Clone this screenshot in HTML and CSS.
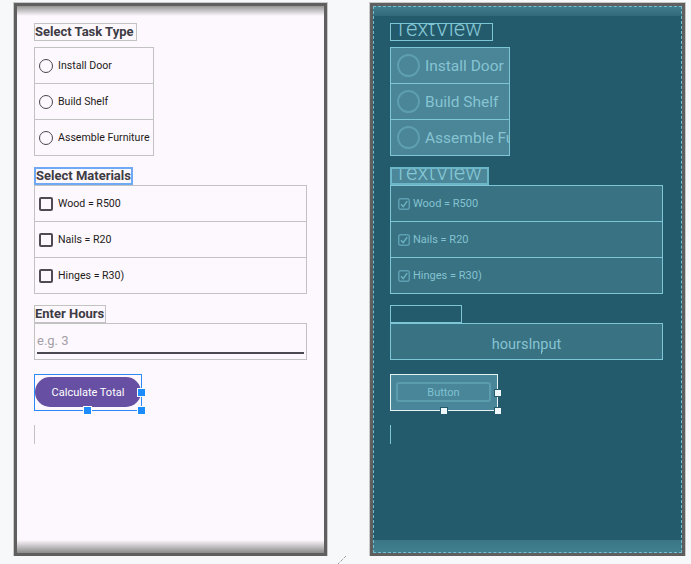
FILE: index.html
```html
<!DOCTYPE html>
<html>
<head>
<meta charset="utf-8">
<link rel="stylesheet" href="styles.css">
</head>
<body>
<div class="stage">
  <div class="device design">
    <div class="topbar"></div>
    <div class="screen">
      <div class="label w-task">Select Task Type</div>
      <div class="group radios">
        <div class="row"><span class="radio"></span><span class="txt">Install Door</span></div>
        <div class="row"><span class="radio"></span><span class="txt">Build Shelf</span></div>
        <div class="row"><span class="radio"></span><span class="txt">Assemble Furniture</span></div>
      </div>
      <div class="label w-mat sel">Select Materials</div>
      <div class="group checks">
        <div class="row"><span class="check"></span><span class="txt">Wood = R500</span></div>
        <div class="row"><span class="check"></span><span class="txt">Nails = R20</span></div>
        <div class="row"><span class="check"></span><span class="txt">Hinges = R30)</span></div>
      </div>
      <div class="label w-hours">Enter Hours</div>
      <div class="edit"><span class="hint">e.g. 3</span><span class="underline"></span></div>
      <div class="btnwrap">
        <div class="btn">Calculate Total</div>
        <span class="handle h-right"></span>
        <span class="handle h-bottom"></span>
        <span class="handle h-corner"></span>
      </div>
      <div class="result"></div>
    </div>
    <div class="bottombar"></div>
  </div>

  <div class="device blueprint">
    <div class="topbar"></div>
    <div class="screen">
      <div class="label w-task"><span class="big">TextView</span></div>
      <div class="group radios">
        <div class="row"><span class="radio"></span><span class="txt">Install Door</span></div>
        <div class="row"><span class="radio"></span><span class="txt">Build Shelf</span></div>
        <div class="row"><span class="radio"></span><span class="txt">Assemble Furniture</span></div>
      </div>
      <div class="label w-mat sel"><span class="big">TextView</span></div>
      <div class="group checks">
        <div class="row"><svg class="check" viewBox="0 0 12 12"><rect x="0.75" y="0.75" width="10.5" height="10.5" rx="2" fill="none" stroke="#5d9fb0" stroke-width="1.5"/><path d="M3 6.2 L5.2 8.6 L9.2 3.2" fill="none" stroke="#6fb4c4" stroke-width="1.4"/></svg><span class="txt">Wood = R500</span></div>
        <div class="row"><svg class="check" viewBox="0 0 12 12"><rect x="0.75" y="0.75" width="10.5" height="10.5" rx="2" fill="none" stroke="#5d9fb0" stroke-width="1.5"/><path d="M3 6.2 L5.2 8.6 L9.2 3.2" fill="none" stroke="#6fb4c4" stroke-width="1.4"/></svg><span class="txt">Nails = R20</span></div>
        <div class="row"><svg class="check" viewBox="0 0 12 12"><rect x="0.75" y="0.75" width="10.5" height="10.5" rx="2" fill="none" stroke="#5d9fb0" stroke-width="1.5"/><path d="M3 6.2 L5.2 8.6 L9.2 3.2" fill="none" stroke="#6fb4c4" stroke-width="1.4"/></svg><span class="txt">Hinges = R30)</span></div>
      </div>
      <div class="label w-hours"></div>
      <div class="edit"><span class="hint">hoursInput</span><span class="tick"></span></div>
      <div class="btnwrap">
        <div class="btn">Button</div>
        <span class="handle h-right"></span>
        <span class="handle h-bottom"></span>
        <span class="handle h-corner"></span>
      </div>
      <div class="result"></div>
    </div>
    <div class="bottombar"></div>
  </div>
</div>
<svg class="resize" width="10" height="10" viewBox="0 0 10 10"><path d="M9 1 L1 9" stroke="#777" stroke-width="1" stroke-dasharray="1 1"/></svg>
</body>
</html>
```

FILE: styles.css
```css
html, body {
  margin: 0;
  padding: 0;
  background: #f7f8fa;
  font-family: Roboto, "Noto Sans", sans-serif;
}

.stage {
  display: flex;
  gap: 43px;
  padding: 3px 0 0 14px;
}

.device {
  width: 313px;
  height: 553px;
  box-sizing: border-box;
  border: 3px solid #5f5f5f;
  box-shadow: 0 0 0 1px #c9c9c9;
  display: flex;
  flex-direction: column;
  overflow: hidden;
}

.screen {
  flex: 1;
  padding: 7px 0 0 17px;
  display: flex;
  flex-direction: column;
  align-items: flex-start;
}

.topbar { height: 10px; }
.bottombar { height: 13px; }

/* ---------- design view ---------- */
.design { background: #fdf8fd; }
.design .topbar { background: linear-gradient(#959595, #fdf8fd); }
.design .bottombar { background: linear-gradient(#fdf8fd, #8a8a8a); }

.label {
  height: 18px;
  box-sizing: border-box;
  border: 1px solid #c2c2c2;
  white-space: nowrap;
  overflow: hidden;
}
.w-task { width: 103px; }
.w-mat { width: 99px; margin-top: 11px; }
.w-hours { width: 72px; margin-top: 11px; }

.design .label {
  font-weight: 700;
  font-size: 13px;
  line-height: 16px;
  color: #3e3c44;
}
.design .label.sel { border: 2px solid #6fa8f5; line-height: 14px; }

.group {
  height: 109px;
  box-sizing: border-box;
  border: 1px solid #c2c2c2;
  display: flex;
  flex-direction: column;
}
.radios { width: 120px; margin-top: 6px; }
.checks { width: 273px; }

.row {
  flex: 1;
  display: flex;
  align-items: center;
  padding-left: 4px;
  gap: 5px;
  white-space: nowrap;
  overflow: hidden;
}
.row + .row { border-top: 1px solid #c2c2c2; }

.design .row { font-size: 10.6px; color: #1d1b20; }

.design .radio {
  width: 14px;
  height: 14px;
  box-sizing: border-box;
  border: 1.5px solid #49454f;
  border-radius: 50%;
  flex: none;
}
.design .check {
  width: 14px;
  height: 14px;
  box-sizing: border-box;
  border: 2px solid #4f4b55;
  border-radius: 2px;
  flex: none;
}

.edit {
  width: 273px;
  height: 37px;
  box-sizing: border-box;
  border: 1px solid #c2c2c2;
  position: relative;
}
.design .hint {
  display: block;
  padding: 9px 0 0 2px;
  font-size: 13px;
  line-height: 16px;
  color: #a3a0a8;
}
.design .underline {
  position: absolute;
  left: 2px;
  right: 2px;
  top: 28px;
  height: 1.5px;
  background: #4d4953;
}

.btnwrap {
  margin-top: 14px;
  width: 108px;
  height: 37px;
  box-sizing: border-box;
  border: 1px solid #2b88f5;
  position: relative;
}
.design .btn {
  margin-top: 2px;
  width: 106px;
  height: 30px;
  border-radius: 15px;
  background: #6750a4;
  color: #ffffff;
  font-size: 11px;
  font-weight: 400;
  display: flex;
  align-items: center;
  justify-content: center;
}

.handle {
  position: absolute;
  width: 7px;
  height: 7px;
  box-sizing: border-box;
}
.h-right { right: -4px; top: 14px; }
.h-bottom { left: 49px; bottom: -4px; }
.h-corner { right: -4px; bottom: -4px; }
.design .handle { background: #1d8cff; border: 1px solid #1d8cff; box-shadow: 0 0 0 1px #ffffff; }

.result {
  margin-top: 14px;
  height: 19px;
  border-left: 1px solid #c2c2c2;
}

/* ---------- blueprint view ---------- */
.blueprint {
  width: 315px;
  background: #235b6c;
  outline: 1px dashed #72bfd0;
  outline-offset: -4px;
}
.blueprint .topbar { background: linear-gradient(#427e8e, #31697a); }
.blueprint .bottombar { background: linear-gradient(#3a7686, #427f8f); }

.blueprint .label { border-color: #7cc6d6; }
.blueprint .label.sel { background: #4b8699; border: 2px solid #6cb6c7; }
.blueprint .big {
  display: block;
  padding-left: 3px;
  font-size: 22px;
  font-weight: 300;
  line-height: 10px;
  color: #85c6d4;
}
.blueprint .label.sel .big { line-height: 8px; padding-left: 2px; }

.blueprint .group { border-color: #7cc6d6; }
.blueprint .radios { background: #4a8598; }
.blueprint .checks { background: #397283; }
.blueprint .row + .row { border-top-color: #7cc6d6; }

.blueprint .radios .row { padding-left: 6px; gap: 5px; font-size: 15.5px; color: #86c4d2; }
.blueprint .radio {
  width: 23px;
  height: 23px;
  box-sizing: border-box;
  border: 2px solid #5d9fb0;
  border-radius: 50%;
  flex: none;
}
.blueprint .checks .row { padding-left: 7px; gap: 3px; font-size: 11px; color: #84c3d1; }
.blueprint .check { width: 12px; height: 12px; flex: none; }

.blueprint .edit { background: #397283; border-color: #7cc6d6; }
.blueprint .hint {
  display: block;
  text-align: center;
  padding-top: 13px;
  font-size: 14.5px;
  line-height: 16px;
  color: #86c4d2;
}
.blueprint .tick {
  position: absolute;
  left: 150px;
  bottom: 5px;
  width: 1px;
  height: 3px;
  background: #7cc6d6;
}

.blueprint .btnwrap { background: #4a8699; border-color: #e4f2f6; }
.blueprint .btn {
  margin: 7px 0 0 5px;
  width: 95px;
  height: 20px;
  box-sizing: border-box;
  border: 2px solid #5b9cad;
  border-radius: 3px;
  font-size: 11px;
  color: #7fc2d1;
  display: flex;
  align-items: center;
  justify-content: center;
}
.blueprint .handle { background: #eef8fb; border: 1px solid #235b6c; width: 8px; height: 8px; }
.blueprint .h-right { right: -5px; }
.blueprint .h-bottom { bottom: -5px; }
.blueprint .h-corner { right: -5px; bottom: -5px; }

.blueprint .result { border-left-color: #7cc6d6; }

.resize {
  position: absolute;
  left: 337px;
  top: 555px;
}
```
